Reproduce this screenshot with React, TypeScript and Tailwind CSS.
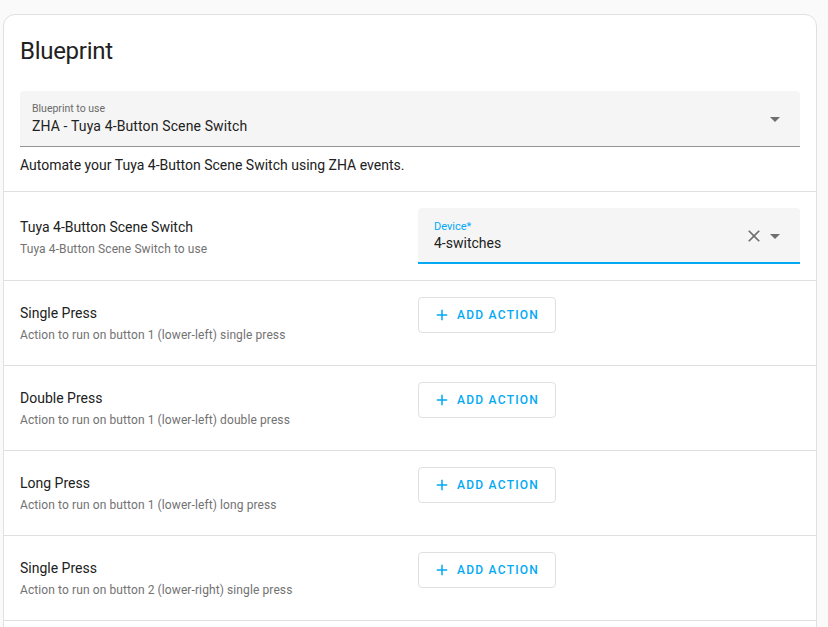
import React from "react";

const Plus = () => (
  <svg width="18" height="18" viewBox="0 0 24 24" fill="currentColor">
    <path d="M19,13H13V19H11V13H5V11H11V5H13V11H19V13Z" />
  </svg>
);

const Close = () => (
  <svg width="20" height="20" viewBox="0 0 24 24" fill="currentColor">
    <path d="M19,6.41L17.59,5L12,10.59L6.41,5L5,6.41L10.59,12L5,17.59L6.41,19L12,13.41L17.59,19L19,17.59L13.41,12L19,6.41Z" />
  </svg>
);

const Arrow = () => (
  <svg width="10" height="5" viewBox="0 0 10 5" fill="currentColor">
    <path d="M0 0L10 0L5 5Z" />
  </svg>
);

const ActionRow = ({ title, sub }: { title: string; sub: string }) => (
  <div className="flex border-t border-[#e0e0e0] px-4 min-h-[85px]">
    <div className="flex-1 flex flex-col justify-center">
      <div className="text-[14px] leading-[20px] text-[#212121]">{title}</div>
      <div className="text-[12px] leading-[16px] mt-[4px] tracking-[0.1px] text-[#727272]">{sub}</div>
    </div>
    <div className="w-[382px] pt-4">
      <button className="h-[36px] flex items-center border border-[#e0e0e0] rounded-[4px] pl-[14px] pr-[16px] text-[#03a9f4]">
        <Plus />
        <span className="ml-[6px] text-[12px] font-medium tracking-[1.25px] uppercase leading-none">
          Add action
        </span>
      </button>
    </div>
  </div>
);

export default function App() {
  return (
    <div
      className="h-[627px] overflow-hidden bg-[#fafafa] pt-[14px] pl-[3px]"
      style={{ fontFamily: "Roboto, 'Liberation Sans', sans-serif" }}
    >
      <div className="w-[814px] bg-white border border-[#e0e0e0] rounded-[12px] overflow-hidden">
        <div className="px-4 pt-[20px] text-[24px] leading-[32px] tracking-[-0.012em] text-[#212121]">
          Blueprint
        </div>
        <div className="px-4 pt-[24px] pb-4">
          <div className="relative h-[56px] bg-[#f5f5f5] rounded-t-[4px] border-b border-[#949494] pl-3 pt-[11px]">
            <div className="text-[10.5px] leading-[14px] text-[#6b6b6b]">Blueprint to use</div>
            <div className="text-[14px] leading-[20px] tracking-[0.13px] text-[#212121]">ZHA - Tuya 4-Button Scene Switch</div>
            <div className="absolute right-[20px] top-[26px] text-[#6f6f6f]">
              <Arrow />
            </div>
          </div>
          <div className="mt-[8px] text-[14px] leading-[20px] text-[#212121]">
            Automate your Tuya 4-Button Scene Switch using ZHA events.
          </div>
        </div>
        <div className="flex border-t border-[#e0e0e0] px-4 min-h-[88px]">
          <div className="flex-1 flex flex-col justify-center">
            <div className="text-[14px] leading-[20px] text-[#212121] mt-[1px]">Tuya 4-Button Scene Switch</div>
            <div className="text-[12px] leading-[16px] mt-[4px] tracking-[0.1px] text-[#727272]">
              Tuya 4-Button Scene Switch to use
            </div>
          </div>
          <div className="w-[382px] py-4">
            <div className="relative h-[56px] bg-[#f5f5f5] rounded-t-[4px] border-b-2 border-[#03a9f4] pl-4 pt-[12px]">
              <div className="text-[11px] leading-[14px] text-[#03a9f4]">Device*</div>
              <div className="text-[14px] leading-[20px] text-[#212121] -mt-[1px]">4-switches</div>
              <div className="absolute right-[36px] top-[18px] text-[#6f6f6f]">
                <Close />
              </div>
              <div className="absolute right-[20px] top-[26px] text-[#6f6f6f]">
                <Arrow />
              </div>
            </div>
          </div>
        </div>
        <ActionRow title="Single Press" sub="Action to run on button 1 (lower-left) single press" />
        <ActionRow title="Double Press" sub="Action to run on button 1 (lower-left) double press" />
        <ActionRow title="Long Press" sub="Action to run on button 1 (lower-left) long press" />
        <ActionRow title="Single Press" sub="Action to run on button 2 (lower-right) single press" />
        <div className="border-t border-[#e0e0e0] h-[40px]" />
      </div>
    </div>
  );
}
